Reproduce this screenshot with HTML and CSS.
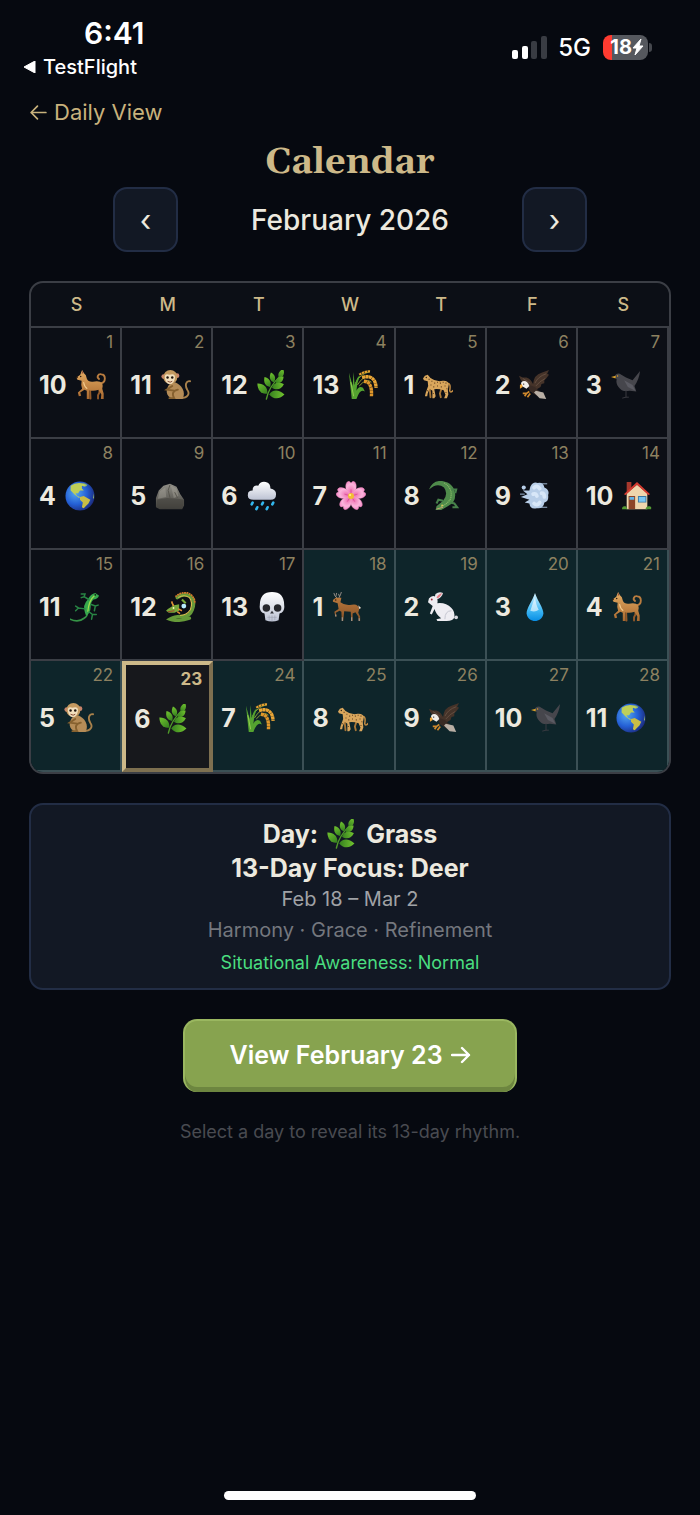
FILE: index.html
```html
<!DOCTYPE html>
<html lang="en">
<head>
    <meta charset="UTF-8">
    <meta name="viewport" content="width=device-width, initial-scale=1.0">
    <title>Calendar</title>
    <link rel="stylesheet" href="styles.css">
</head>
<body>
    <svg class="sprite" aria-hidden="true">
        <defs>
            <linearGradient id="fur" x1="0" y1="0" x2="0" y2="1"><stop offset="0" stop-color="#e5ad63"/><stop offset="1" stop-color="#a8682f"/></linearGradient>
            <linearGradient id="deerFur" x1="0" y1="0" x2="0" y2="1"><stop offset="0" stop-color="#b9783c"/><stop offset="1" stop-color="#855026"/></linearGradient>
            <linearGradient id="leafFill" x1="0" y1="0" x2="0" y2="1"><stop offset="0" stop-color="#72c42f"/><stop offset="1" stop-color="#357f1f"/></linearGradient>
            <linearGradient id="stone" x1="0" y1="0" x2="0" y2="1"><stop offset="0" stop-color="#918f87"/><stop offset="1" stop-color="#3f3e3a"/></linearGradient>
            <linearGradient id="water" x1="0" y1="0" x2="0" y2="1"><stop offset="0" stop-color="#d8f5ff"/><stop offset="0.6" stop-color="#42baf5"/><stop offset="1" stop-color="#078de4"/></linearGradient>
            <linearGradient id="cloud" x1="0" y1="0" x2="0" y2="1"><stop offset="0" stop-color="#fff"/><stop offset="1" stop-color="#bdc3d4"/></linearGradient>
            <radialGradient id="sea" cx="0.35" cy="0.4" r="0.7"><stop offset="0" stop-color="#55a8ef"/><stop offset="0.55" stop-color="#2460d6"/><stop offset="1" stop-color="#1b2878"/></radialGradient>
            <radialGradient id="petal" cx="0.5" cy="0.7" r="0.7"><stop offset="0" stop-color="#ee6fb0"/><stop offset="0.7" stop-color="#fbb4dc"/><stop offset="1" stop-color="#f58fc8"/></radialGradient>
            <path id="leaf" d="M0 0C-4-2-5-7-1-12C3-9 4-4 0 0Z"/>
            <path id="petalShape" d="M16 16C10 12 9 4 12 1Q14-1 16 2Q18-1 20 1C23 4 22 12 16 16Z"/>
        </defs>
        <symbol id="dog" viewBox="0 0 32 32">
            <path d="M27 14C32 13 32 5 27 4.500C23 4 22 8 24.500 9.500" fill="none" stroke="#b97c3f" stroke-width="2" stroke-linecap="round"/>
            <path d="M25 20L25 24L23.500 27V30.500M15 20L15.500 30.500" fill="none" stroke="#945a2a" stroke-width="2" stroke-linecap="round"/>
            <path d="M6.500 0L8.500 3.500Q11 5 11.500 9Q13 13 18 12.500Q25 11 28 14Q29 17 28 20L29.500 25L29.500 31H26.500L27 26L24 21Q19 23 14 21.500L14.500 31H11.500L11.500 22L9 21L4.500 24L5.500 27.500L3 28L2 24L6.500 20Q5 16 6 11.500L1.500 10.500L0.500 8L4.500 5Z" fill="url(#fur)"/>
            <path d="M6.800 0.500L8 3.500L6 4Z" fill="#96513a"/><circle cx="5" cy="7" r="0.800" fill="#2a1a10"/><circle cx="1" cy="7.800" r="1" fill="#2a1a10"/>
            <path d="M8 13Q9 18 12 20" fill="none" stroke="#f3ca8c" stroke-width="1.200"/>
        </symbol>
        <symbol id="monkey" viewBox="0 0 32 32">
            <path d="M21 30C29 30 31 25 28 21C25 16 27 11 31 12" fill="none" stroke="#a9814b" stroke-width="2" stroke-linecap="round"/>
            <path d="M15 13C22 16 27 23 23 31H12L8 28C4 23 7 17 10 14Z" fill="#b58c57"/>
            <path d="M12 17L6 21L14 22M18 21Q10 23 14 30L9 30" fill="none" stroke="#86612f" stroke-width="2" stroke-linecap="round"/>
            <circle cx="3" cy="7" r="2.600" fill="#c9836b"/><circle cx="17" cy="6" r="2.600" fill="#c9836b"/>
            <ellipse cx="10" cy="7.500" rx="7.500" ry="7.500" fill="#c49a60"/>
            <path d="M4 8Q4 3 9 5Q15 3 15 8Q14 15 9.500 15Q5 15 4 8Z" fill="#f2dfbd"/>
            <circle cx="7" cy="8" r="1.300" fill="#20150c"/><circle cx="12" cy="8" r="1.300" fill="#20150c"/><path d="M7 12Q10 14 12 12" fill="none" stroke="#7c3f28"/>
        </symbol>
        <symbol id="herb" viewBox="0 0 32 32">
            <path d="M10 31Q12 19 25 6" fill="none" stroke="#4f9a29" stroke-width="1.500" stroke-linecap="round"/>
            <g fill="url(#leafFill)">
                <use href="#leaf" transform="translate(11 25) rotate(-40) scale(1.250)"/>
                <use href="#leaf" transform="translate(14 18) rotate(-25)"/>
                <use href="#leaf" transform="translate(18 13) rotate(-12) scale(0.900)"/>
                <use href="#leaf" transform="translate(24 9) rotate(25) scale(0.900)"/>
                <use href="#leaf" transform="translate(20 14) rotate(55) scale(0.900)"/>
                <use href="#leaf" transform="translate(16 19) rotate(78) scale(1.100)"/>
                <use href="#leaf" transform="translate(13 26) rotate(95) scale(1.350)"/>
            </g>
        </symbol>
        <symbol id="rice" viewBox="0 0 32 32">
            <path d="M8 14Q13 4 23 2M10 16Q17 4 26 8M12 17Q20 8 25 13" fill="none" stroke="#8f9d31" stroke-width="1"/>
            <path d="M4 31L1 3L5 17L6 2L7 16Q10 6 13 6Q10 11 9 22Q12 16 16 19L18 23Q13 19 9 31Z" fill="#54a330"/>
            <path d="M3 13L6 28" stroke="#97cd52"/>
            <path d="M12 5Q18 1 24 1.500" fill="none" stroke="#e6a12f" stroke-width="2.400" stroke-dasharray="2.600 0.600"/>
            <path d="M15 8Q29 4 30 19" fill="none" stroke="#eaa536" stroke-width="3.600" stroke-dasharray="3.200 0.400"/>
            <path d="M17 12Q26 12 25 28" fill="none" stroke="#df962a" stroke-width="3.600" stroke-dasharray="3.200 0.400"/>
        </symbol>
        <symbol id="leopard" viewBox="0 0 32 32">
            <path d="M26 14Q30 14 28.500 22Q29 25 32 22" fill="none" stroke="#c18a43" stroke-width="1.600" stroke-linecap="round"/>
            <path d="M7 19L8 29M20 19L18 25L19 29" fill="none" stroke="#a97737" stroke-width="2" stroke-linecap="round"/>
            <path d="M2 6L5 5L8 8.500Q14 13 21 11.500Q27 11 27.500 15.500L26.500 21L27 26L25.500 30H22.500L24 26.500L22 21.500Q17 20 12 20.500L13.500 28L12 30H10L10 22L7 20L5 25L4.500 28H2L3 24L5.500 17L5 12L1 11L0 9Z" fill="#d9a65c"/>
            <path d="M6 10h1M9 12h1M12 14h1M15 13h1M18 14h1M21 13h1M24 14h1M8 16h1M11 18h1M15 17h1M19 18h1M23 17h1M25 20h1M10.500 25h1M24 24h1M4 22h1" stroke="#5c3b1c" stroke-width="1.200"/>
            <circle cx="3.500" cy="8" r="0.700" fill="#23170e"/>
        </symbol>
        <symbol id="eagle" viewBox="0 0 32 32">
            <path d="M9 17Q2 13 0 6L4 8L8 8Q13 10 15 15Q16 5 24 3L32 0L30 4L32 5L29 9L27 11L27 14L24 15L23 18L18 21Z" fill="#453329"/>
            <path d="M17 14Q20 7 29 4M18 17Q22 12 28 9M4 9L12 14" stroke="#6d5748" fill="none" stroke-width="0.800"/>
            <path d="M8 15L17 18L24 25L20 28L12 23Z" fill="#382a24"/>
            <path d="M18 22L26 24L29 31L22 30L16 24Z" fill="#b9afa5"/>
            <path d="M4 12Q9 11 11 17L8 20L3 17Q1 13 4 12Z" fill="#f1eeea"/>
            <path d="M3 15L1 16L1 20L4 18Z" fill="#f0a63a"/><circle cx="5" cy="15" r="0.700" fill="#1d1511"/>
            <path d="M11 23L8 25L4 25M8 25L6 28M12 25L9 29" fill="none" stroke="#cf882c" stroke-width="1.800"/>
        </symbol>
        <symbol id="blackbird" viewBox="0 0 32 32">
            <path d="M4 6Q7 2 11 5L16 8L23 11L31 1Q30 10 25 17L27 23L20 22Q12 24 8 18Q5 14 6 10Z" fill="#46464c"/>
            <path d="M14 11L23 16L26 22L18 18Z" fill="#5b5b63"/>
            <path d="M5 6L0 7.500L5 9Z" fill="#dda22a"/><circle cx="7" cy="6.500" r="0.800" fill="#d79b2c"/>
            <path d="M16 22L16 29L12 30M16 29H19" fill="none" stroke="#3c3c42" stroke-width="1"/>
        </symbol>
        <symbol id="earth" viewBox="0 0 32 32">
            <circle cx="16" cy="16" r="15.500" fill="url(#sea)"/>
            <path d="M6 5Q10 2 15 2L22 3L21 6L18 5L18 8L20 10L16 10L14 13L11 13L13 16L16 17L15 18L10 14L6 10Z" fill="#bfcf58"/>
            <path d="M16 17L20 16L27 20L25 24L22 27L20 29L18 28L19 23L16 20Z" fill="#c9bd45"/>
            <path d="M20 3L24 4L22 6ZM30 13L31 18L30 19Z" fill="#9bc06b"/>
        </symbol>
        <symbol id="rock" viewBox="0 0 32 32">
            <path d="M1 18L4 10L9 5L16 3L23 6L27 14L31 20L31 26L29 30L5 30L1 28Z" fill="url(#stone)"/>
            <path d="M5 11L11 7L12 17L3 19ZM17 5L23 8L25 16L20 18Z" fill="#aaa79e" opacity="0.400"/>
            <path d="M2 20L13 18L24 19L31 20L30 27L9 29L2 28Z" fill="#45433e" opacity="0.600"/>
            <path d="M16 4L14 10L16 18M21 12L24 18" fill="none" stroke="#55534c"/>
        </symbol>
        <symbol id="rain" viewBox="0 0 32 32">
            <path d="M7 20Q0 20 1 14Q1 10 6 10Q6 4 12 5Q14 0 20 1Q25 2 25 8Q31 9 31 14Q31 20 25 20Z" fill="url(#cloud)"/>
            <path d="M6 23L5 25M17 23L16 25M28 23L27 25M11 28L10 30M22 28L21 30" stroke="#32b7ed" stroke-width="2.800" stroke-linecap="round"/>
        </symbol>
        <symbol id="blossom" viewBox="0 0 32 32">
            <g fill="url(#petal)" stroke="#ef85bd" stroke-width="0.400">
                <use href="#petalShape"/>
                <use href="#petalShape" transform="rotate(72 16 16)"/>
                <use href="#petalShape" transform="rotate(144 16 16)"/>
                <use href="#petalShape" transform="rotate(216 16 16)"/>
                <use href="#petalShape" transform="rotate(288 16 16)"/>
            </g>
            <path d="M16 16V9M16 16L9 14M16 16L23 14M16 16L12 22M16 16L20 22" stroke="#d84b95" stroke-width="0.800"/>
            <circle cx="16" cy="16" r="3.200" fill="#f3bd34"/><circle cx="15" cy="15" r="1.200" fill="#fff08a"/>
        </symbol>
        <symbol id="crocodile" viewBox="0 0 32 32">
            <path d="M0 9Q4-1 14 0Q27 2 28 15Q28 23 20 27L13 31L7 31L8 27L15 21Q21 14 16 7Q9 1 0 9Z" fill="#4f8b4b"/>
            <path d="M16 2Q26 8 23 19Q19 25 12 28" fill="none" stroke="#89b868" stroke-width="1.200" stroke-dasharray="1.200 0.800"/>
            <path d="M24 9L29 9L28 13M15 21L10 20L8 24M23 23L27 24L30 28L25 28" fill="none" stroke="#47804a" stroke-width="2.200"/>
            <path d="M8 30L15 28" stroke="#d5a47a" stroke-width="0.900"/><circle cx="14" cy="26" r="0.900" fill="#e7cf5a"/>
        </symbol>
        <symbol id="wind" viewBox="0 0 32 32">
            <path d="M11 6Q14 0 19 2Q25 1 26 7Q32 10 30 15Q31 22 26 23Q25 30 18 29Q11 31 10 24L5 23L10 20L1 17L8 14L3 10L10 10Z" fill="#b8cee8"/>
            <path d="M15 7Q18 4 21 8M15 24Q18 27 21 23M23 13Q26 13 26 17M14 14Q17 13 18 16" fill="none" stroke="#d8e7f8" stroke-width="4" stroke-linecap="round"/>
            <circle cx="4" cy="7" r="2.200" fill="#b8cee8"/><path d="M22 3H29M20 28H29M0 14H5" stroke="#a9c1dd" stroke-width="1"/>
        </symbol>
        <symbol id="house" viewBox="0 0 32 32">
            <path d="M5 1H10V9L5 13Z" fill="#a7382d"/><path d="M5 13L16 4L27 13V30H5Z" fill="#efd6ad"/>
            <path d="M2 14L16 1L30 14L28 15L16 4L4 15Z" fill="#d53b30"/>
            <path d="M7 16H14V30H7Z" fill="#8d4528"/><path d="M8 17H13V20H8Z" fill="#62b5e8"/>
            <path d="M17 16H26V23H17Z" fill="#3c79a5"/><path d="M18 17H25V22H18Z" fill="#79c6f3"/>
            <path d="M0 30Q0 26 4 27L6 30ZM25 30Q26 26 30 27Q32 28 31 30Z" fill="#539934"/>
        </symbol>
        <symbol id="lizard" viewBox="0 0 32 32">
            <path d="M0 29Q9 33 15 28Q20 25 18 20" fill="none" stroke="#359346" stroke-width="1.800" stroke-linecap="round"/>
            <path d="M16 22Q13 14 19 8Q22 2 27 1L31 4Q29 8 25 8Q22 11 22 16Q22 23 17 25Z" fill="#36a84d"/>
            <path d="M20 8L15 5L16 2L12 2M15 5L12 6M22 13L27 15L26 20M27 15L30 14M16 18L9 17L6 20M9 17L6 15M20 21L24 24L23 29M24 24L28 24" fill="none" stroke="#288444" stroke-width="1.600" stroke-linecap="round"/>
            <path d="M26 4Q20 9 19 21" fill="none" stroke="#a1dc4d" stroke-width="1.300"/><circle cx="27" cy="3" r="0.900" fill="#131b13"/>
        </symbol>
        <symbol id="dragon" viewBox="0 0 32 32">
            <path d="M12 6Q18 1 25 4Q32 9 28 19Q25 27 16 26Q9 26 4 29Q12 32 25 28" fill="none" stroke="#669a39" stroke-width="3.600" stroke-linecap="round"/>
            <path d="M13 6Q19 2 25 6Q29 11 26 19Q22 25 15 25" fill="none" stroke="#d5bd4e" stroke-width="1.200"/>
            <path d="M10 5L14 2L18 1L23 1L27 3L30 7L31 12" fill="none" stroke="#d47a2c" stroke-width="1.800" stroke-dasharray="2 0.600"/>
            <path d="M2 18L7 15L5 10L9 14L14 13L14 20L9 22L3 22L0 20Z" fill="#78a93b"/>
            <path d="M8 15L6 10M13 18L17 20M12 21L15 23" stroke="#e28d35" stroke-width="1.600"/>
            <path d="M17 8L21 12" fill="none" stroke="#78a93b" stroke-width="2.200"/>
            <circle cx="19" cy="15" r="2.600" fill="#b8ecff"/><circle cx="8" cy="17" r="1" fill="#fff8bb"/>
            <path d="M2 21L9 20" stroke="#a53f29"/>
        </symbol>
        <symbol id="skull" viewBox="0 0 32 32">
            <path d="M3 14Q3 0 16 0Q29 0 29 14Q30 21 24 23L23 30Q16 33 9 30L8 23Q2 21 3 14Z" fill="url(#cloud)"/>
            <ellipse cx="10" cy="17" rx="4" ry="4" fill="#26272c"/><ellipse cx="22" cy="17" rx="4" ry="4" fill="#26272c"/>
            <path d="M16 20L14 23H18Z" fill="#33343a"/><path d="M11 27H21M13 25V30M16 25V31M19 25V30" stroke="#9a9dab" stroke-width="0.600"/>
        </symbol>
        <symbol id="deer" viewBox="0 0 32 32">
            <path d="M6 7L3 4L2 1M4 5L5 1M7 7L9 3L10 0M8 5L7 2" fill="none" stroke="#99908a" stroke-width="1"/>
            <path d="M4 6L10 6L9 11Q14 15 21 13.500Q28 12 29 18L28 22L30 26V31H28.500L28 26L25 21.500L22 23L22 31H20.500L20 21L13 20.500L12 31H10.500L10 21L8 20L4 22L5 26L3.500 26L2.500 21L7 18L6 12L1 10.500L1 8.500Z" fill="url(#deerFur)"/>
            <path d="M28 14L31 17L29 18Z" fill="#eadbc8"/><circle cx="4" cy="8.500" r="0.700" fill="#1b120c"/>
            <path d="M11 27V31M21 27V31M29 28V31M4 24V26" stroke="#a39b92" stroke-width="1.200"/>
        </symbol>
        <symbol id="rabbit" viewBox="0 0 32 32">
            <path d="M7 6L8 2Q12-1 16 1Q15 6 9 8Z" fill="#e7e6ea"/><path d="M9 6Q11 2 15 1Q13 6 9 7Z" fill="#e37b85"/>
            <path d="M1 7Q4 3 8 5Q11 7 10 12Q19 11 25 17Q29 21 28 27Q27 31 20 31H10L9 29L14 28Q8 23 7 18L4 24L2 23L5 15L0 11Z" fill="#eeedf2"/>
            <circle cx="30" cy="27" r="2" fill="#d8d8df"/><path d="M18 29Q18 20 25 20" fill="none" stroke="#c3c4cf"/><circle cx="4" cy="8" r="1" fill="#9c2836"/>
        </symbol>
        <symbol id="drop" viewBox="0 0 32 32">
            <path d="M16 1C19 10 25 17 25 23C24 29 20 31 16 31C12 31 8 29 7 23C7 17 13 10 16 1Z" fill="url(#water)"/>
            <path d="M16 5Q17 14 20 19Q16 22 11 20Q13 14 16 5Z" fill="#fff" opacity="0.600"/>
        </symbol>
    </svg>

    <div class="phone">
        <header class="status-bar">
            <div class="status-left">
                <div class="time">6:41</div>
                <a href="#" class="return-app">
                    <svg class="return-arrow" viewBox="0 0 13 12"><path d="M1 6L12 0V12Z" fill="#fff" stroke="#fff" stroke-linejoin="round"/></svg>
                    TestFlight
                </a>
            </div>
            <div class="status-right">
                <svg class="signal" viewBox="0 0 36 23">
                    <g fill="#fff"><rect y="14" width="6" height="9" rx="2"/><rect x="10" y="10" width="6" height="13" rx="2"/></g>
                    <g fill="#393c43"><rect x="19" y="5" width="6" height="18" rx="2"/><rect x="29" width="6" height="23" rx="2"/></g>
                </svg>
                <span class="network">5G</span>
                <div class="battery">
                    <span>18</span>
                    <svg class="bolt" viewBox="0 0 12 18"><path d="M9 1L1 10H5L3 17L11 8H7Z" fill="#fff" stroke="#fff" stroke-linejoin="round"/></svg>
                </div>
            </div>
        </header>

        <main>
            <a href="#" class="back-link">
                <svg class="back-arrow" viewBox="0 0 18 16"><path d="M16 8H2M8 2L2 8L8 14" fill="none" stroke="currentColor" stroke-width="1.600" stroke-linecap="round" stroke-linejoin="round"/></svg>
                Daily View
            </a>
            <h1>Calendar</h1>
            <nav class="month-nav">
                <button class="nav-button" aria-label="Previous month">‹</button>
                <h2>February 2026</h2>
                <button class="nav-button" aria-label="Next month">›</button>
            </nav>

            <div class="calendar-frame">
                <table class="calendar">
                    <thead>
                        <tr><th>S</th><th>M</th><th>T</th><th>W</th><th>T</th><th>F</th><th>S</th></tr>
                    </thead>
                    <tbody>
                        <tr>
                            <td><button class="day"><span class="date">1</span><b>10</b><svg><use href="#dog"/></svg></button></td>
                            <td><button class="day"><span class="date">2</span><b>11</b><svg><use href="#monkey"/></svg></button></td>
                            <td><button class="day"><span class="date">3</span><b>12</b><svg><use href="#herb"/></svg></button></td>
                            <td><button class="day"><span class="date">4</span><b>13</b><svg><use href="#rice"/></svg></button></td>
                            <td><button class="day"><span class="date">5</span><b>1</b><svg><use href="#leopard"/></svg></button></td>
                            <td><button class="day"><span class="date">6</span><b>2</b><svg><use href="#eagle"/></svg></button></td>
                            <td><button class="day"><span class="date">7</span><b>3</b><svg><use href="#blackbird"/></svg></button></td>
                        </tr>
                        <tr>
                            <td><button class="day"><span class="date">8</span><b>4</b><svg><use href="#earth"/></svg></button></td>
                            <td><button class="day"><span class="date">9</span><b>5</b><svg><use href="#rock"/></svg></button></td>
                            <td><button class="day"><span class="date">10</span><b>6</b><svg><use href="#rain"/></svg></button></td>
                            <td><button class="day"><span class="date">11</span><b>7</b><svg><use href="#blossom"/></svg></button></td>
                            <td><button class="day"><span class="date">12</span><b>8</b><svg><use href="#crocodile"/></svg></button></td>
                            <td><button class="day"><span class="date">13</span><b>9</b><svg><use href="#wind"/></svg></button></td>
                            <td><button class="day"><span class="date">14</span><b>10</b><svg><use href="#house"/></svg></button></td>
                        </tr>
                        <tr>
                            <td><button class="day"><span class="date">15</span><b>11</b><svg><use href="#lizard"/></svg></button></td>
                            <td><button class="day"><span class="date">16</span><b>12</b><svg><use href="#dragon"/></svg></button></td>
                            <td><button class="day"><span class="date">17</span><b>13</b><svg><use href="#skull"/></svg></button></td>
                            <td class="focus"><button class="day"><span class="date">18</span><b>1</b><svg><use href="#deer"/></svg></button></td>
                            <td class="focus"><button class="day"><span class="date">19</span><b>2</b><svg><use href="#rabbit"/></svg></button></td>
                            <td class="focus"><button class="day"><span class="date">20</span><b>3</b><svg><use href="#drop"/></svg></button></td>
                            <td class="focus"><button class="day"><span class="date">21</span><b>4</b><svg><use href="#dog"/></svg></button></td>
                        </tr>
                        <tr>
                            <td class="focus"><button class="day"><span class="date">22</span><b>5</b><svg><use href="#monkey"/></svg></button></td>
                            <td class="selected"><button class="day" aria-pressed="true"><span class="date">23</span><b>6</b><svg><use href="#herb"/></svg></button></td>
                            <td class="focus"><button class="day"><span class="date">24</span><b>7</b><svg><use href="#rice"/></svg></button></td>
                            <td class="focus"><button class="day"><span class="date">25</span><b>8</b><svg><use href="#leopard"/></svg></button></td>
                            <td class="focus"><button class="day"><span class="date">26</span><b>9</b><svg><use href="#eagle"/></svg></button></td>
                            <td class="focus"><button class="day"><span class="date">27</span><b>10</b><svg><use href="#blackbird"/></svg></button></td>
                            <td class="focus"><button class="day"><span class="date">28</span><b>11</b><svg><use href="#earth"/></svg></button></td>
                        </tr>
                    </tbody>
                </table>
            </div>

            <section class="details">
                <h3>Day: <svg><use href="#herb"/></svg> Grass</h3>
                <h3>13-Day Focus: Deer</h3>
                <p class="range">Feb 18 – Mar 2</p>
                <p class="traits">Harmony · Grace · Refinement</p>
                <p class="awareness">Situational Awareness: Normal</p>
            </section>

            <button class="view-button">
                View February 23
                <svg class="view-arrow" viewBox="0 0 20 18"><path d="M1 9H18M11 2L18 9L11 16" fill="none" stroke="currentColor" stroke-width="2.400" stroke-linecap="round" stroke-linejoin="round"/></svg>
            </button>
            <p class="hint">Select a day to reveal its 13-day rhythm.</p>
        </main>
        <div class="home-indicator"></div>
    </div>
</body>
</html>
```
FILE: styles.css
```css
* {
    box-sizing: border-box;
}
body {
    margin: 0;
    background-color: #060910;
    color: #ece9df;
    font-family: Inter, "Liberation Sans", sans-serif;
}
h1, h2, h3, p {
    margin: 0;
}
a {
    text-decoration: none;
}
button {
    font-family: inherit;
    color: inherit;
    cursor: pointer;
}
.sprite {
    position: absolute;
    width: 0;
    height: 0;
}
.phone {
    display: flex;
    flex-direction: column;
    min-height: 100vh;
    padding-bottom: 15px;
}
.status-bar {
    display: flex;
    justify-content: space-between;
    padding: 16px 52px 0 23px;
    color: #fff;
}
.time {
    padding-left: 61px;
    font-size: 30px;
    font-weight: 600;
    line-height: 34px;
}
.return-app {
    display: flex;
    align-items: center;
    gap: 7px;
    color: #fff;
    font-size: 20px;
    font-weight: 500;
    line-height: 34px;
}
.return-arrow {
    width: 13px;
    height: 12px;
}
.status-right {
    display: flex;
    align-items: center;
    height: 62px;
}
.signal {
    width: 36px;
    height: 23px;
}
.network {
    margin: 0 12px 0 10px;
    font-size: 24px;
    font-weight: 500;
}
.battery {
    position: relative;
    display: flex;
    align-items: center;
    justify-content: flex-end;
    width: 45px;
    height: 25px;
    padding-right: 4px;
    border-radius: 8px;
    background: linear-gradient(to right, #ff3b30 20%, #55585e 20%);
    font-size: 20px;
    font-weight: 700;
}
.battery::after {
    content: "";
    position: absolute;
    left: 46px;
    top: 8px;
    width: 3px;
    height: 9px;
    border-radius: 0 4px 4px 0;
    background-color: #45484e;
}
.bolt {
    width: 12px;
    height: 18px;
}
main {
    padding: 12px 29px 0;
}
.back-link {
    display: inline-flex;
    align-items: center;
    gap: 6px;
    color: #c8b27c;
    font-size: 22px;
    line-height: 32px;
}
.back-arrow {
    width: 19px;
    height: 17px;
}
h1 {
    margin-top: 11px;
    color: #cdb989;
    font-family: Gelasio, Georgia, "Liberation Serif", serif;
    font-size: 36px;
    line-height: 48px;
    text-align: center;
}
.month-nav {
    display: flex;
    align-items: center;
    justify-content: space-between;
    padding: 0 84px;
}
.month-nav h2 {
    font-size: 28px;
    font-weight: 500;
}
.nav-button {
    width: 65px;
    height: 65px;
    padding: 0;
    border: 2px solid #222d45;
    border-radius: 14px;
    background-color: #121824;
    font-size: 30px;
}
.calendar-frame {
    margin-top: 29px;
    border: 2px solid #3b3e45;
    border-radius: 14px;
    overflow: hidden;
    background-color: #0c0f16;
}
.calendar {
    width: 100%;
    border-spacing: 0;
    table-layout: fixed;
}
.calendar th {
    height: 45px;
    padding: 0;
    border-bottom: 2px solid #3b3e45;
    color: #cdb989;
    font-size: 18px;
    font-weight: 500;
}
.calendar td {
    height: 111px;
    padding: 0;
    border-right: 2px solid #3b3e45;
    border-bottom: 2px solid #3b3e45;
}
.calendar td.focus {
    border-color: #3b5055;
    background-color: #0e252a;
}
.calendar td.selected {
    border: 4px solid;
    border-color: #cdb989 #7e7050 #7e7050 #cdb989;
    background-color: #17181c;
}
.day {
    position: relative;
    display: flex;
    align-items: center;
    gap: 9px;
    width: 100%;
    height: 109px;
    padding: 4px 0 0 8px;
    border: 0;
    background: none;
    font-size: 25px;
}
.selected .day {
    height: 103px;
}
.day svg {
    width: 30px;
    height: 30px;
}
.date {
    position: absolute;
    top: 3px;
    right: 7px;
    color: #8d8160;
    font-size: 17px;
    line-height: 22px;
}
.selected .date {
    color: #cdb989;
    font-weight: 700;
}
.details {
    margin-top: 29px;
    padding: 12px 20px 9px;
    border: 2px solid #222d45;
    border-radius: 14px;
    background-color: #121824;
    text-align: center;
}
.details h3 {
    display: flex;
    align-items: center;
    justify-content: center;
    gap: 9px;
    font-size: 25px;
    font-weight: 700;
    line-height: 34px;
}
.details h3 svg {
    width: 30px;
    height: 30px;
}
.range {
    color: #a0a2a6;
    font-size: 20px;
    line-height: 28px;
}
.traits {
    color: #74777e;
    font-size: 20px;
    line-height: 34px;
}
.awareness {
    color: #4ade80;
    font-size: 18px;
    line-height: 32px;
}
.view-button {
    display: flex;
    align-items: center;
    justify-content: center;
    gap: 8px;
    margin: 29px auto 0;
    padding: 17px 44px 20px;
    border: 2px solid #9ab760;
    border-bottom: 0;
    border-radius: 14px;
    background-color: #87a34f;
    box-shadow: inset 0 -5px #6d8640;
    color: #fff;
    font-size: 25px;
    font-weight: 600;
    line-height: 34px;
}
.view-arrow {
    width: 20px;
    height: 18px;
}
.hint {
    margin-top: 28px;
    color: #494b51;
    font-size: 18px;
    line-height: 24px;
    text-align: center;
}
.home-indicator {
    width: 36%;
    height: 9px;
    margin: auto auto 0;
    border-radius: 5px;
    background-color: #fff;
}
```
